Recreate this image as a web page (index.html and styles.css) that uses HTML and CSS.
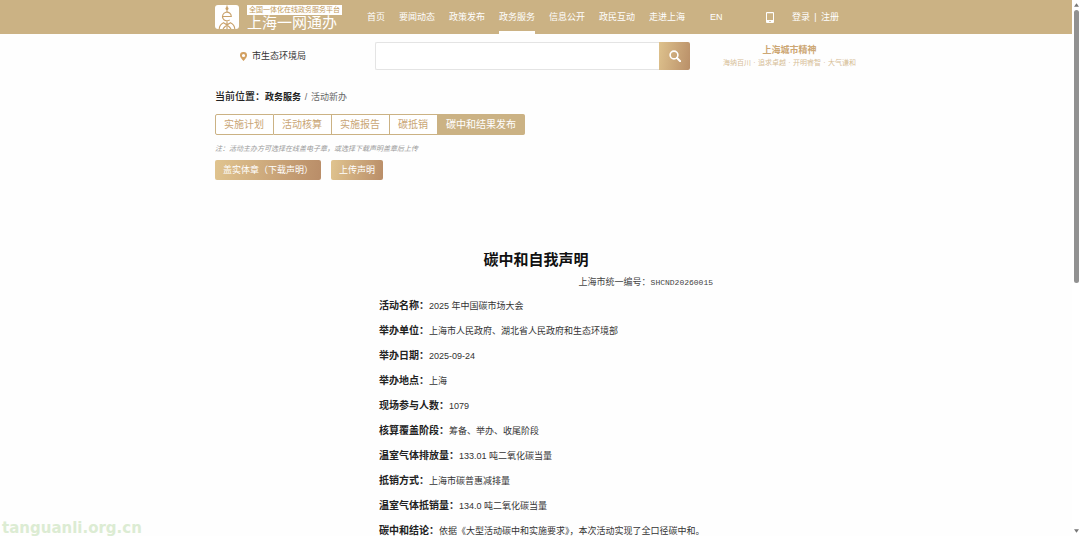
FILE: index.html
```html
<!DOCTYPE html>
<html lang="zh-CN">
<head>
<meta charset="utf-8">
<title>上海一网通办</title>
<link rel="stylesheet" href="styles.css">
</head>
<body>
<div class="app">
  <div class="page">
    <header class="topbar">
      <div class="container topbar-inner">
        <a class="brand" href="#">
          <svg class="brand-mark" viewBox="0 0 24 24" aria-hidden="true">
            <rect width="24" height="24" rx="3" fill="#fff"/>
            <g fill="none" stroke="#c8a068" stroke-width="1.100">
              <path d="M12 0.500v6.500"/>
              <path d="M7.500 11.500h8.800a4.400 4.400 0 1 0-1.600 3.400"/>
              <path d="M12 16.500v7.500M4.200 24c.2-3 1.500-5 4.300-6.300 2.500 1.300 6 3.600 7.500 6.300M19.800 24c-.2-3-1.500-5-4.300-6.300-2.500 1.300-6 3.600-7.500 6.300"/>
            </g>
            <circle cx="12" cy="3.500" r="1.500" fill="#c8a068"/>
          </svg>
          <span class="brand-text">
            <span class="brand-tag">全国一体化在线政务服务平台</span>
            <span class="brand-name">上海一网通办</span>
          </span>
        </a>
        <nav class="nav">
          <a href="#">首页</a>
          <a href="#">要闻动态</a>
          <a href="#">政策发布</a>
          <a class="active" href="#">政务服务</a>
          <a href="#">信息公开</a>
          <a href="#">政民互动</a>
          <a href="#">走进上海</a>
        </nav>
        <a class="lang" href="#">EN</a>
        <div class="account">
          <svg class="phone" viewBox="0 0 8 11" aria-hidden="true">
            <path fill="#fff" fill-rule="evenodd" d="M1 0h6a1 1 0 0 1 1 1v9a1 1 0 0 1-1 1H1a1 1 0 0 1-1-1V1a1 1 0 0 1 1-1zM1 1.200v6.800h6V1.200zM3.300 9v1h1.400V9z"/>
          </svg>
          <a href="#">登录</a><span class="bar">|</span><a href="#">注册</a>
        </div>
      </div>
    </header>

    <div class="container tools">
      <div class="place">
        <svg class="pin" viewBox="0 0 7 9" aria-hidden="true">
          <path fill="#d2a061" fill-rule="evenodd" d="M3.500 0A3.400 3.400 0 0 1 7 3.500C7 5.500 5 7.300 3.500 9 2 7.300 0 5.500 0 3.500A3.400 3.400 0 0 1 3.500 0zm0 1.900a1.600 1.600 0 1 0 0 3.200 1.600 1.600 0 0 0 0-3.200z"/>
        </svg>
        <span>市生态环境局</span>
      </div>
      <form class="search">
        <input type="text" aria-label="搜索">
        <button type="button" aria-label="搜索">
          <svg viewBox="0 0 12 12" aria-hidden="true">
            <circle cx="5" cy="5" r="3.900" fill="none" stroke="#fff" stroke-width="1.600"/>
            <path d="M8 8l3.200 3.200" stroke="#fff" stroke-width="2" stroke-linecap="round"/>
          </svg>
        </button>
      </form>
      <div class="spirit">
        <strong>上海城市精神</strong>
        <div class="values">
          <span>海纳百川</span><i>·</i><span>追求卓越</span><i>·</i><span>开明睿智</span><i>·</i><span>大气谦和</span>
        </div>
      </div>
    </div>

    <main class="container">
      <div class="crumbs">
        <span class="crumbs-label">当前位置：</span><a class="crumbs-root" href="#">政务服务</a><span class="slash">/</span><span>活动新办</span>
      </div>
      <div class="tabs">
        <button type="button">实施计划</button>
        <button type="button">活动核算</button>
        <button type="button">实施报告</button>
        <button type="button">碳抵销</button>
        <button type="button" class="current">碳中和结果发布</button>
      </div>
      <p class="note">注：活动主办方可选择在线盖电子章，或选择下载声明盖章后上传</p>
      <div class="actions">
        <button type="button">盖实体章（下载声明）</button>
        <button type="button">上传声明</button>
      </div>

      <article class="statement">
        <h1>碳中和自我声明</h1>
        <p class="serial">上海市统一编号：<span>SHCND20260015</span></p>
        <div class="facts">
          <p><b>活动名称：</b>2025 年中国碳市场大会</p>
          <p><b>举办单位：</b>上海市人民政府、湖北省人民政府和生态环境部</p>
          <p><b>举办日期：</b>2025-09-24</p>
          <p><b>举办地点：</b>上海</p>
          <p><b>现场参与人数：</b>1079</p>
          <p><b>核算覆盖阶段：</b>筹备、举办、收尾阶段</p>
          <p><b>温室气体排放量：</b>133.01 吨二氧化碳当量</p>
          <p><b>抵销方式：</b>上海市碳普惠减排量</p>
          <p><b>温室气体抵销量：</b>134.0 吨二氧化碳当量</p>
          <p><b>碳中和结论：</b>依据《大型活动碳中和实施要求》，本次活动实现了全口径碳中和。</p>
        </div>
      </article>
    </main>
  </div>
  <div class="scrollbar" aria-hidden="true">
    <svg viewBox="0 0 6 4"><path d="M3 0l3 4H0z" fill="#777"/></svg>
    <div class="track"><div class="thumb"></div></div>
    <svg viewBox="0 0 6 4"><path d="M0 0h6L3 4z" fill="#777"/></svg>
  </div>
  <div class="watermark">tanguanli.org.cn</div>
</div>
</body>
</html>
```

FILE: styles.css
```css
* {
  box-sizing: border-box;
}

body {
  margin: 0;
  background: #fefefe;
  color: #333;
  font: 9px/12px "Liberation Sans", "Noto Sans CJK SC", sans-serif;
}

a {
  color: inherit;
  text-decoration: none;
}

button,
input {
  margin: 0;
  font: inherit;
}

p,
h1 {
  margin: 0;
}

svg {
  display: block;
  flex: none;
}

.app {
  position: relative;
  display: grid;
  grid-template-columns: 1fr 8px;
  height: 100vh;
  overflow: hidden;
}

.page {
  min-width: 0;
  overflow: hidden;
}

.container {
  width: 59%;
  min-width: 642px;
  margin: 0 auto;
}

.topbar {
  background: #cbb284;
  color: #fff;
}

.topbar-inner {
  display: flex;
  align-items: center;
  height: 34px;
}

.brand {
  display: flex;
  gap: 8px;
}

.brand-mark {
  width: 24px;
  height: 24px;
}

.brand-text {
  display: flex;
  flex-direction: column;
}

.brand-tag {
  padding: 0 2px;
  background: #fff;
  color: #c09a5c;
  font-size: 7px;
  line-height: 10px;
}

.brand-name {
  font-size: 15px;
  line-height: 15px;
}

.nav {
  display: flex;
  gap: 14px;
  margin-left: 25px;
  height: 100%;
}

.nav a {
  border-bottom: 3px solid transparent;
  line-height: 34px;
}

.nav .active {
  border-color: #fff;
}

.lang {
  margin-left: 25px;
}

.account {
  display: flex;
  align-items: center;
  margin: 0 18px 0 auto;
}

.phone {
  width: 8px;
  height: 11px;
  margin-right: 18px;
}

.bar {
  width: 11px;
  text-align: center;
}

.tools {
  display: grid;
  grid-template-columns: 160px 315px 1fr;
  padding-top: 8px;
}

.place {
  display: flex;
  align-items: center;
  gap: 5px;
  padding-left: 25px;
}

.pin {
  width: 7px;
  height: 9px;
}

.search {
  display: flex;
  height: 28px;
}

.search input {
  flex: 1;
  min-width: 0;
  padding: 0 8px;
  border: 1px solid #e4e4e4;
  border-right: 0;
  border-radius: 2px 0 0 2px;
  background: #fff;
}

.search button {
  display: grid;
  place-items: center;
  width: 31px;
  padding: 0;
  border: 0;
  border-radius: 0 2px 2px 0;
  background: linear-gradient(100deg, #dec28d, #b98f68);
}

.search svg {
  width: 12px;
  height: 12px;
}

.spirit {
  display: flex;
  flex-direction: column;
  align-items: center;
  padding: 2px 0 0 32px;
  color: #cda774;
}

.values {
  display: flex;
  color: #d6bd96;
  font-size: 7px;
  line-height: 14px;
  white-space: nowrap;
}

.values i {
  width: 7px;
  font-style: normal;
  text-align: center;
}

.crumbs {
  display: flex;
  margin-top: 21px;
  color: #666;
}

.crumbs-label {
  color: #222;
  font-size: 10px;
  font-weight: 500;
}

.crumbs-root {
  color: #222;
  font-weight: bold;
}

.slash {
  width: 10px;
  text-align: center;
}

.tabs {
  display: flex;
  margin-top: 11px;
}

.tabs button {
  height: 21px;
  padding: 0 9px 0 8px;
  border: 1px solid #cbb284;
  border-left-width: 0;
  background: #fff;
  color: #c9a574;
  font-size: 10px;
}

.tabs button:first-child {
  border-left-width: 1px;
  border-radius: 2px 0 0 2px;
}

.tabs .current {
  padding: 0 8px;
  border-radius: 0 2px 2px 0;
  background: #cbb284;
  color: #fff;
}

.note {
  margin-top: 8px;
  color: #999;
  font-size: 7px;
  font-style: italic;
}

.actions {
  display: flex;
  gap: 10px;
  margin-top: 5px;
}

.actions button {
  height: 20px;
  padding: 0 8px;
  border: 0;
  border-radius: 2px;
  background: linear-gradient(100deg, #e0c48f, #b98d68);
  color: #fff;
}

.statement {
  width: 354px;
  margin: 68px auto 0;
  white-space: nowrap;
}

.statement h1 {
  color: #111;
  font-size: 15px;
  line-height: 24px;
  text-align: center;
}

.serial {
  line-height: 20px;
  text-align: right;
  color: #444;
}

.serial span {
  font-family: "Liberation Mono", monospace;
  font-size: 8px;
}

.facts {
  display: grid;
  grid-auto-rows: 25px;
  padding-left: 20px;
}

.facts p {
  display: flex;
  align-items: center;
  white-space: pre;
}

.facts b {
  color: #222;
  font-size: 10px;
}

.scrollbar {
  display: flex;
  flex-direction: column;
  align-items: center;
  gap: 3px;
  padding: 3px 0;
  background: #fff;
}

.scrollbar svg {
  width: 5px;
  height: 4px;
}

.track {
  flex: 1;
}

.thumb {
  width: 5px;
  height: 53%;
  border-radius: 3px;
  background: #919191;
}

.watermark {
  position: absolute;
  bottom: 0;
  left: 2px;
  color: #dcecd3;
  font: bold 15px/16px "DejaVu Sans", sans-serif;
}
```
